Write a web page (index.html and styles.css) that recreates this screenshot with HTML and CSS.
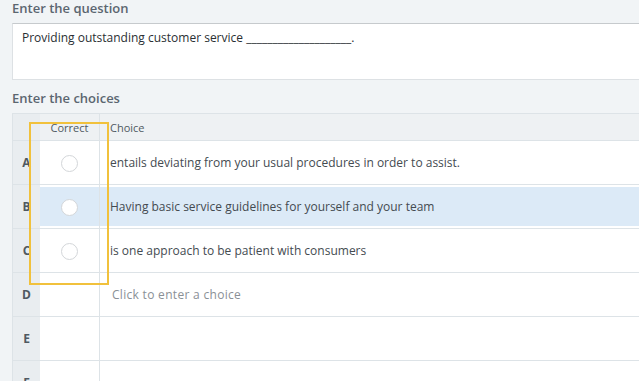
FILE: index.html
```html
<!DOCTYPE html>
<html lang="en">
<head>
    <meta charset="UTF-8">
    <title>Question editor</title>
    <link rel="stylesheet" href="styles.css">
</head>
<body>
    <div class="editor">
        <h2 class="label">Enter the question</h2>
        <div class="question">Providing outstanding customer service ____________________.</div>

        <h2 class="label">Enter the choices</h2>
        <div class="choices">
            <div class="row head">
                <div class="cell key"></div>
                <div class="cell correct">Correct</div>
                <div class="cell choice">Choice</div>
            </div>
            <div class="row">
                <div class="cell key">A</div>
                <div class="cell correct"><span class="radio"></span></div>
                <div class="cell choice">entails deviating from your usual procedures in order to assist.</div>
            </div>
            <div class="row selected">
                <div class="cell key">B</div>
                <div class="cell correct"><span class="radio"></span></div>
                <div class="cell choice">Having basic service guidelines for yourself and your team</div>
            </div>
            <div class="row">
                <div class="cell key">C</div>
                <div class="cell correct"><span class="radio"></span></div>
                <div class="cell choice">is one approach to be patient with consumers</div>
            </div>
            <div class="row">
                <div class="cell key">D</div>
                <div class="cell correct"></div>
                <div class="cell choice placeholder">Click to enter a choice</div>
            </div>
            <div class="row">
                <div class="cell key">E</div>
                <div class="cell correct"></div>
                <div class="cell choice"></div>
            </div>
            <div class="row">
                <div class="cell key">F</div>
                <div class="cell correct"></div>
                <div class="cell choice"></div>
            </div>

            <div class="highlight"></div>
        </div>
    </div>
</body>
</html>
```

FILE: styles.css
```css
* {
    margin: 0;
    padding: 0;
    box-sizing: border-box;
}

html, body {
    height: 100%;
    overflow: hidden;
}

body {
    font-family: 'Open Sans', 'Noto Sans', sans-serif;
    background: #f1f4f6;
    color: #3d444a;
}

.editor {
    width: 680px;
    padding: 0 0 0 12px;
}

.label {
    font-size: 13px;
    font-weight: 600;
    color: #5b6670;
    line-height: 16px;
    height: 16px;
    margin-bottom: 7px;
}

.question {
    height: 57px;
    background: #fff;
    border: 1px solid #dde1e4;
    border-top-color: #c6cacd;
    padding: 4px 9px;
    font-size: 12px;
    line-height: 20px;
    color: #2a2f33;
    margin-bottom: 10px;
}

.choices {
    position: relative;
    border-left: 1px solid #dde3e7;
    border-top: 1px solid #dde3e7;
}

.row {
    display: flex;
    height: 44px;
    border-bottom: 1px solid #dde3e7;
    background: #fff;
}

.row.head {
    height: 27px;
    background: #eef1f3;
}

.cell {
    display: flex;
    align-items: center;
}

.key {
    width: 27px;
    justify-content: center;
    background: #e9edf0;
    font-size: 12px;
    font-weight: 700;
    color: #4f5961;
}

.correct {
    width: 60px;
    justify-content: center;
    border-right: 1px solid #dde3e7;
    font-size: 11px;
    color: #4f5961;
}

.choice {
    flex: 1;
    padding-left: 10px;
    font-size: 12px;
    color: #444b51;
}

.head .choice {
    font-size: 11px;
    color: #4f5961;
}

.row.selected .correct,
.row.selected .choice {
    background: #dceaf7;
    box-shadow: inset 0 2px #fff, inset 0 -2px #fff;
}

.placeholder {
    padding-left: 12px;
    color: #8a9096;
    letter-spacing: 0.3px;
}

.radio {
    width: 17px;
    height: 17px;
    margin-top: 1px;
    border-radius: 50%;
    border: 1px solid #d3d6d9;
    background: #fff;
}

.highlight {
    position: absolute;
    left: 16px;
    top: 8px;
    width: 80px;
    height: 163px;
    border: 2px solid #f1c13c;
}
```
